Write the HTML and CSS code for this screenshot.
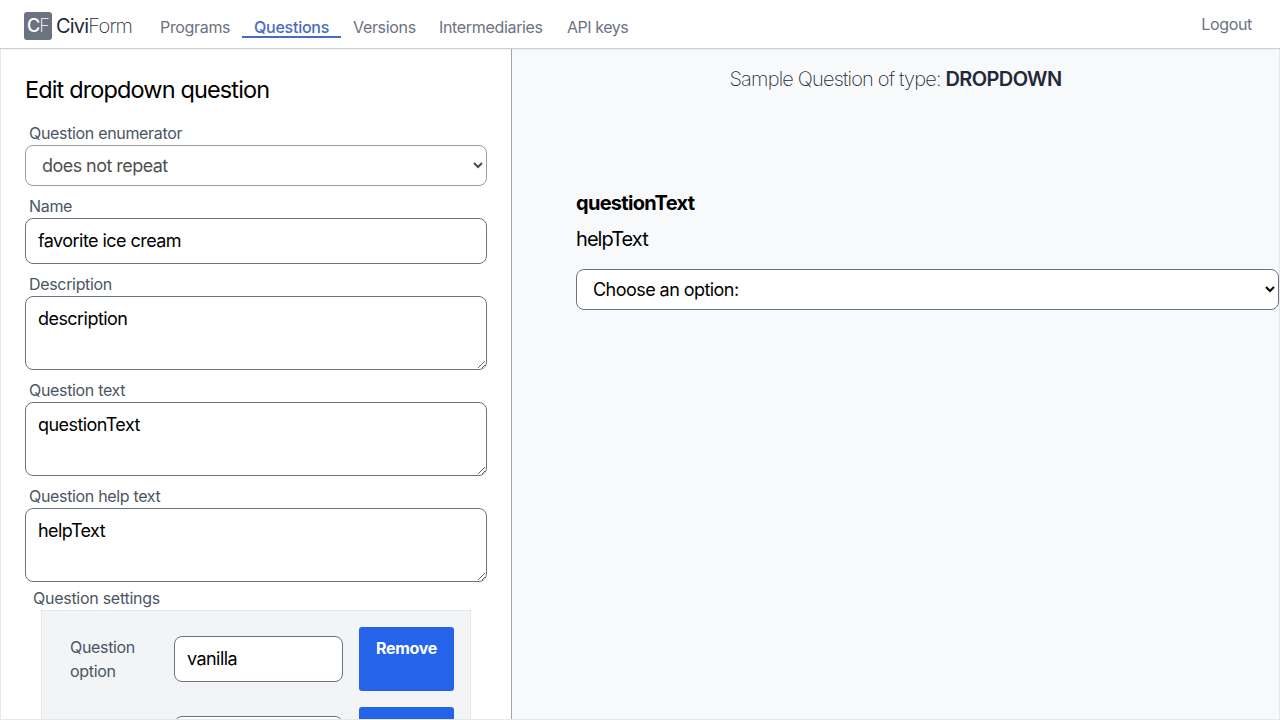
FILE: index.html
```html
<!DOCTYPE html>
<html lang="en">
<head>
<meta charset="utf-8">
<title>Edit dropdown question</title>
<link rel="stylesheet" href="styles.css">
</head>
<body>
<nav class="nav">
  <div class="logo"><span class="logo-mark"><b>C</b><span>F</span></span><span class="logo-name"><b>Civi</b><span>Form</span></span></div>
  <div class="links">
    <a class="link programs">Programs</a>
    <a class="link questions active">Questions</a>
    <a class="link versions">Versions</a>
    <a class="link intermediaries">Intermediaries</a>
    <a class="link keys">API keys</a>
  </div>
  <a class="logout">Logout</a>
</nav>
<main class="main">
  <form class="editor">
    <h1 class="title">Edit dropdown question</h1>
    <label class="label">Question enumerator</label>
    <select class="control select" disabled><option>does not repeat</option></select>
    <label class="label">Name</label>
    <input class="control input" type="text" value="favorite ice cream">
    <label class="label">Description</label>
    <textarea class="control area">description</textarea>
    <label class="label">Question text</label>
    <textarea class="control area">questionText</textarea>
    <label class="label">Question help text</label>
    <textarea class="control area">helpText</textarea>
    <div class="settings-label">Question settings</div>
    <div class="settings">
      <div class="row">
        <label class="option-label">Question option</label>
        <input class="control input" type="text" value="vanilla">
        <button class="remove" type="button">Remove</button>
      </div>
      <div class="row">
        <span></span>
        <input class="control input" type="text">
        <button class="remove" type="button" aria-label="Remove"></button>
      </div>
    </div>
  </form>
  <section class="preview">
    <div class="sample">Sample Question of type: <b>DROPDOWN</b></div>
    <div class="question">
      <div class="question-text">questionText</div>
      <div class="help-text">helpText</div>
      <select class="control select"><option>Choose an option:</option></select>
    </div>
  </section>
</main>
</body>
</html>
```
FILE: styles.css
```css
* { box-sizing: border-box; }
body {
  margin: 0;
  height: 720px;
  display: flex;
  flex-direction: column;
  overflow: hidden;
  font-family: Inter, "Liberation Sans", sans-serif;
  font-size: 16px;
  line-height: 24px;
  letter-spacing: -0.33px;
  color: #000;
  background: #fff;
}
.nav {
  position: relative;
  z-index: 1;
  flex: none;
  height: 48px;
  display: flex;
  align-items: flex-start;
  padding: 0 28px 0 24px;
  color: #6b7280;
  background: #fff;
  box-shadow: 0 1px 0 #cbced4, 0 2px 1px rgba(0, 0, 0, 0.03);
}
.logo { display: flex; width: 124px; padding-top: 12px; gap: 4px; }
.logo-mark {
  width: 28px;
  height: 28px;
  border-radius: 3px;
  background: #6b7280;
  color: #fff;
  font-size: 18px;
  line-height: 28px;
  text-align: center;
  letter-spacing: -0.8px;
}
.logo-mark b { font-weight: 500; }
.logo-mark span { font-weight: 200; }
.logo-name { font-size: 20px; line-height: 28px; color: #1f2937; letter-spacing: -0.8px; }
.logo-name b { font-weight: 400; }
.logo-name span { font-weight: 200; }
.links { display: flex; gap: 0; padding-top: 16px; }
.link { height: 22px; line-height: 23px; padding-left: 12px; white-space: nowrap; }
.programs { width: 94px; }
.questions { width: 99px; letter-spacing: -0.25px; }
.versions { width: 86px; }
.intermediaries { width: 128px; }
.keys { letter-spacing: -0.45px; }
.active { color: #4a6bbd; font-weight: 500; border-bottom: 2px solid #4a6bbd; }
.logout { margin-left: auto; padding-top: 12px; }
.main { flex: 1; min-height: 0; display: flex; border: 1px solid #e5e7eb; }
.editor {
  width: 511px;
  flex: none;
  border-right: 1px solid #9ca3af;
  padding: 25px 24px 0;
  display: flex;
  flex-direction: column;
  overflow: hidden;
}
.title { margin: 0 0 15px; font-size: 23.5px; line-height: 32px; font-weight: 400; letter-spacing: -0.87px; }
.label { flex: none; height: 24px; padding-left: 4px; color: #4b5563; }
.control {
  flex: none;
  display: block;
  width: 100%;
  margin: 0 0 8px;
  border: 1px solid #6b7280;
  border-radius: 8px;
  background: #fff;
  color: #000;
  font: 400 18px/28px Inter, "Liberation Sans", sans-serif;
  letter-spacing: -0.55px;
}
.select { height: 41px; padding: 8px 12px; line-height: normal; }
.select:disabled { opacity: 0.7; color: #000; }
.input { height: 46px; padding: 7px 12px 9px; }
.area { height: 74px; padding: 8px 12px; }
.settings-label { flex: none; height: 20px; padding-left: 8px; line-height: 24px; letter-spacing: -0.27px; color: #4b5563; margin-top: -4px; }
.settings {
  flex: none;
  margin: 4px 16px 0;
  padding: 16px 16px 0 28px;
  border: 1px solid #e5e7eb;
  background: #f3f4f6;
}
.row { display: grid; grid-template-columns: 88px 169px 95px; gap: 16px; height: 64px; margin-bottom: 16px; align-items: center; }
.row .input { margin: 0; }
.option-label { color: #4b5563; padding-right: 12px; }
.remove {
  align-self: stretch;
  display: flex;
  justify-content: center;
  padding: 9px 0 0;
  border: 0;
  border-radius: 3px;
  background: #2563eb;
  color: #fff;
  font: 700 16px/24px Inter, "Liberation Sans", sans-serif;
  letter-spacing: -0.3px;
}
.preview { flex: 1; min-width: 0; background: #f8f9fb; }
.sample { padding-top: 16px; text-align: center; font-size: 20px; line-height: 28px; font-weight: 200; color: #1f2937; letter-spacing: -0.82px; }
.sample b { font-weight: 600; letter-spacing: -0.6px; }
.question { padding: 96px 0 0 64px; font-size: 20px; line-height: 28px; }
.question-text { font-weight: 700; margin-bottom: 8px; letter-spacing: -0.7px; }
.help-text { margin-bottom: 16px; letter-spacing: -0.95px; }
```
